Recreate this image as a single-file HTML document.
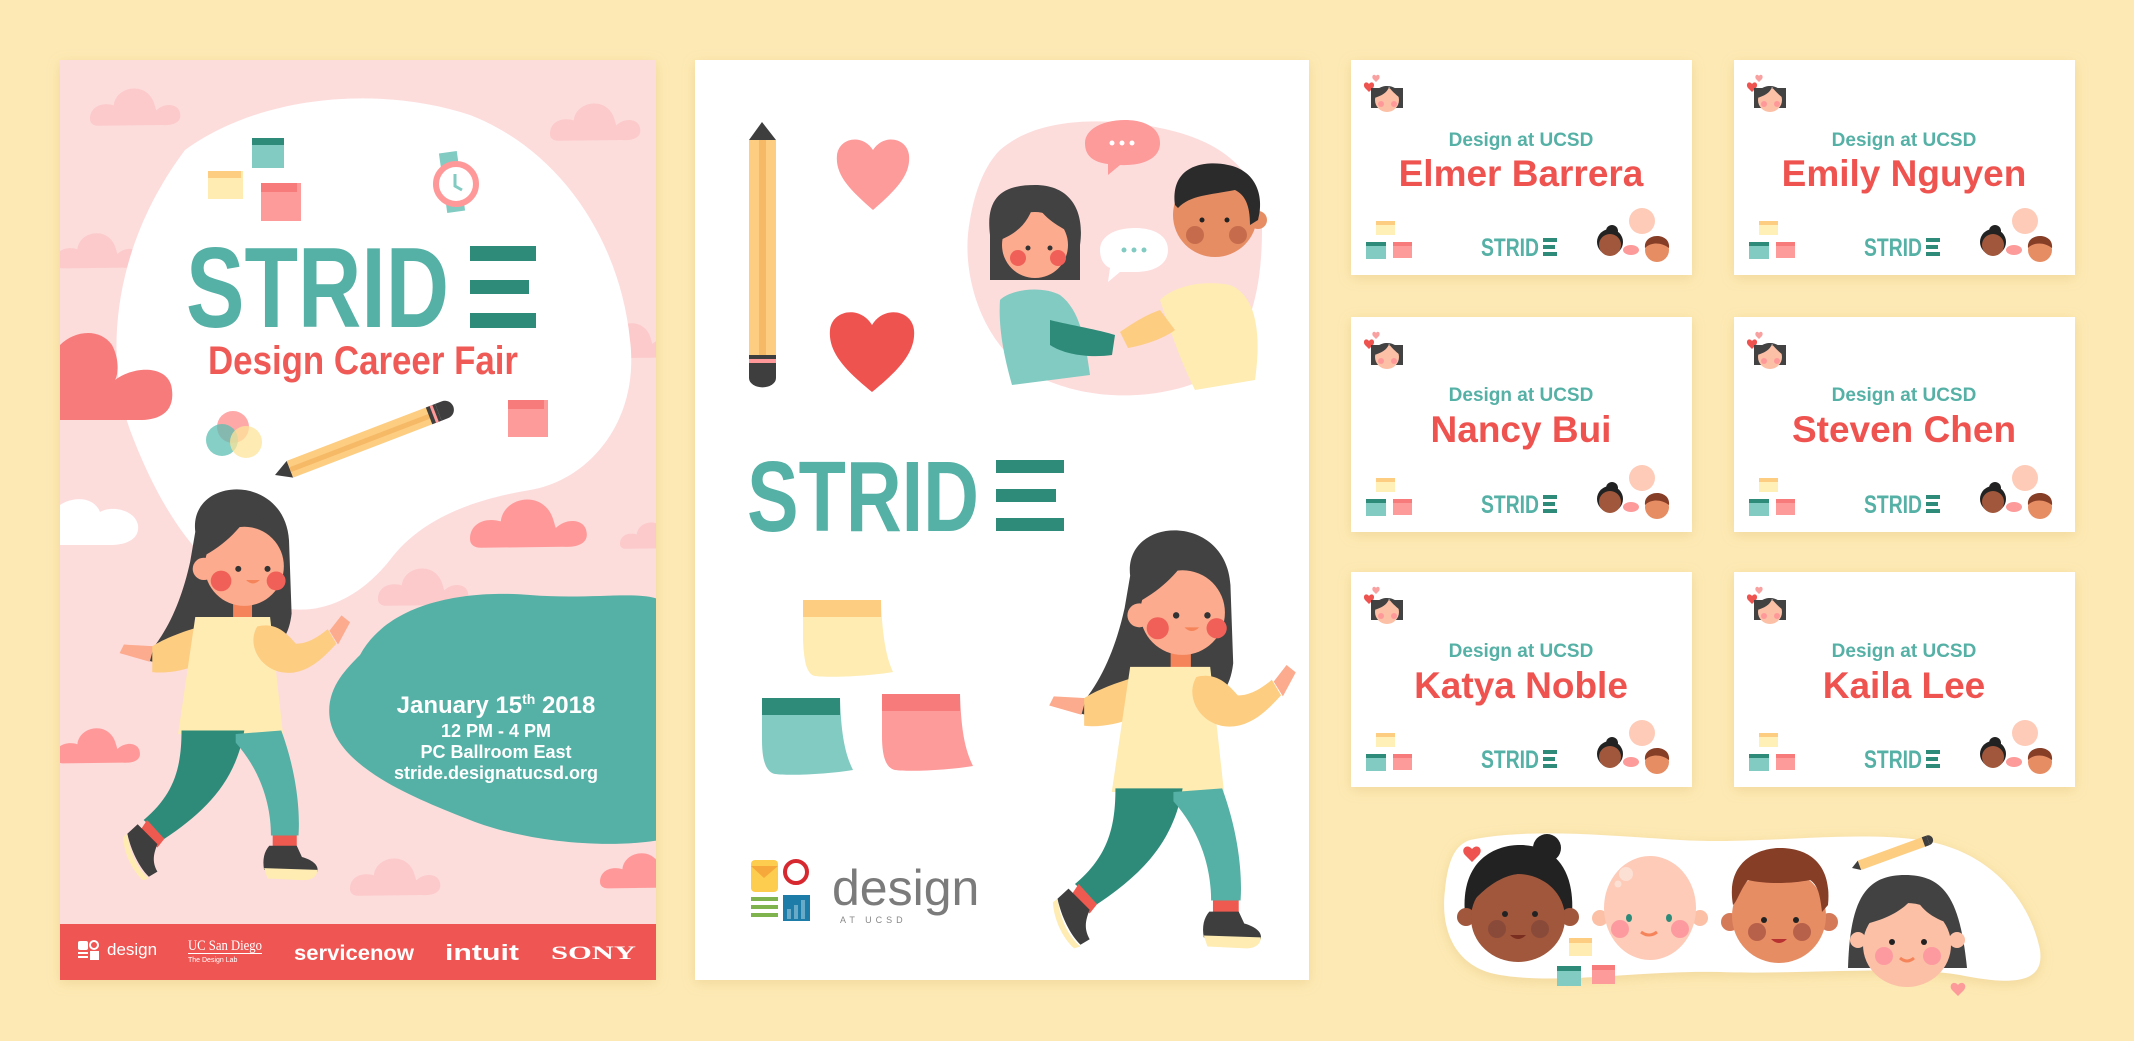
<!DOCTYPE html>
<html><head><meta charset="utf-8"><style>
html,body{margin:0;padding:0;background:#fde9b4;}
svg{display:block}
text{font-family:"Liberation Sans",sans-serif;font-weight:bold}
</style></head><body>
<svg width="2134" height="1041" viewBox="0 0 2134 1041" xmlns="http://www.w3.org/2000/svg">
<defs>
<filter id="sh" x="-10%" y="-10%" width="120%" height="120%"><feDropShadow dx="0" dy="3" stdDeviation="6" flood-color="#d9b76a" flood-opacity="0.35"/></filter>
<g id="cloud"><path d="M0 40 C0 25 15 20 28 24 C30 5 55 -2 68 10 C75 16 76 24 78 30 C88 20 105 22 106 34 C108 45 95 48 85 47 L10 48 C4 48 0 45 0 40Z"/></g>
<g id="girl">
  <path d="M-52 -35 C-60 -100 52 -105 57 -25 L60 60 C56 95 38 105 18 98 L-30 108 C-70 118 -100 120 -112 112 C-85 85 -68 45 -58 0 Z" fill="#424242"/>
  <rect x="-8" y="42" width="22" height="25" fill="#f6845a"/>
  <path d="M-100 98 L-135 96 L-140 106 L-105 116Z" fill="#fcab8e"/>
  <path d="M-45 75 C-65 80 -90 90 -102 98 L-102 128 C-85 130 -65 126 -50 120 Z" fill="#fdcd82"/>
  <path d="M-52 64 L35 64 L50 200 L-72 200 Z" fill="#feecb3"/>
  <path d="M20 75 C5 100 30 135 65 128 C85 124 100 108 112 95 L102 78 C90 88 78 95 65 95 C52 80 40 70 20 75Z" fill="#fdcd82"/>
  <path d="M104 80 L118 62 L128 70 L114 96Z" fill="#fcab8e"/>
  <path d="M-68 196 L5 196 C-5 255 -40 290 -88 322 L-112 300 C-76 270 -68 238 -68 196Z" fill="#2e8b7a"/>
  <path d="M-5 200 L48 196 C66 245 70 290 68 318 L36 318 C36 285 26 245 -5 210Z" fill="#55b0a5"/>
  <path d="M-108 300 L-88 322 L-96 332 L-116 312Z" fill="#ef5a50"/>
  <path d="M38 318 L66 318 L66 332 L38 332Z" fill="#ef5a50"/>
  <path d="M-119 305 L-96 328 C-100 338 -103 348 -96 360 L-106 366 C-120 352 -128 330 -131 316Z" fill="#3e3e3e"/>
  <path d="M-131 316 C-128 338 -120 356 -106 368 L-113 370 C-126 358 -135 338 -136 320Z" fill="#feecb3"/>
  <path d="M34 330 L66 330 L72 343 C83 346 92 352 90 360 L28 358 C26 346 28 337 34 330Z" fill="#3e3e3e"/>
  <path d="M28 356 L90 358 C90 366 83 370 74 370 L32 368Z" fill="#feecb3"/>
  <circle cx="-42" cy="8" r="13" fill="#fcab8e"/>
  <circle cx="5" cy="5" r="46" fill="#fcab8e"/>
  <path d="M-46 -5 C-54 -68 50 -76 56 -8 C40 -28 22 -50 14 -64 C6 -44 -16 -20 -46 -5Z" fill="#424242"/>
  <circle cx="-22" cy="22" r="12" fill="#f06059"/><circle cx="42" cy="22" r="11" fill="#f06059"/>
  <circle cx="-2" cy="8" r="3.5" fill="#333"/><circle cx="32" cy="8" r="3.5" fill="#333"/>
  <path d="M7 21 Q15 29 23 21Z" fill="#f6845a"/>
</g>
<g id="face-f">
  <rect x="-16" y="-10" width="32" height="20" fill="#424242"/>
  <circle cx="0" cy="2" r="12" fill="#fcc0a6"/>
  <path d="M-13 0 C-14 -16 14 -16 13 0 C8 -4 4 -8 2 -11 C0 -5 -6 -2 -13 0Z" fill="#424242"/>
  <circle cx="-6" cy="6" r="3" fill="#f99"/><circle cx="7" cy="6" r="3" fill="#f99"/>
</g>
<g id="cardart">
  <rect width="341" height="215" fill="#fff" filter="url(#sh)"/>
  <path d="M14 28 c-3 -4 1 -8 4 -4 c3 -4 7 0 4 4 l-4 4z" fill="#ef5350"/>
  <path d="M22 19 c-2 -3 1 -6 3 -3 c2 -3 5 0 3 3 l-3 3z" fill="#f9a0a0"/>
  <use href="#face-f" transform="translate(36,38)"/>
  <rect x="25" y="161" width="19" height="14" fill="#fff0b8"/><rect x="25" y="161" width="19" height="4" fill="#fdcd82"/>
  <rect x="15" y="182" width="20" height="17" fill="#82cbc2"/><rect x="15" y="182" width="20" height="4" fill="#2e8b7a"/>
  <rect x="42" y="182" width="19" height="16" fill="#fd9a9a"/><rect x="42" y="182" width="19" height="4" fill="#f77b7b"/>
  <text x="130" y="196" font-size="25" fill="#55b0a5" textLength="58" lengthAdjust="spacingAndGlyphs">STRID</text>
  <rect x="192" y="178" width="14" height="4" fill="#2e8b7a"/><rect x="192" y="185" width="12" height="4" fill="#2e8b7a"/><rect x="192" y="192" width="14" height="4" fill="#2e8b7a"/>
  <circle cx="261" cy="171" r="6" fill="#222"/>
  <circle cx="259" cy="182" r="13" fill="#222"/><circle cx="259" cy="185" r="11" fill="#a0573c"/>
  <circle cx="291" cy="161" r="13" fill="#fdcbb8"/>
  <ellipse cx="280" cy="190" rx="8" ry="5" fill="#fd9a9a"/>
  <circle cx="306" cy="190" r="12" fill="#e68d64"/><path d="M294 188 C292 172 320 172 318 188 C310 182 300 182 294 188Z" fill="#863e27"/>
</g>
</defs>

<!-- ============ POSTER ============ -->
<g filter="url(#sh)"><rect x="60" y="60" width="596" height="920" fill="#fddcdc"/></g>
<clipPath id="pc"><rect x="60" y="60" width="596" height="920"/></clipPath>
<g clip-path="url(#pc)">
  <g fill="#fccaca">
    <use href="#cloud" transform="translate(90,85) scale(0.85)"/>
    <use href="#cloud" transform="translate(550,100) scale(0.85)"/>
    <use href="#cloud" transform="translate(55,230) scale(0.8)"/>
    <use href="#cloud" transform="translate(590,320) scale(0.8)"/>
    <use href="#cloud" transform="translate(378,565) scale(0.85)"/>
    <use href="#cloud" transform="translate(620,520) scale(0.6)"/>
    <use href="#cloud" transform="translate(350,855) scale(0.85)"/>
  </g>
  <g fill="#f99">
    <use href="#cloud" transform="translate(470,495) scale(1.1)"/>
    <use href="#cloud" transform="translate(55,725) scale(0.8)"/>
    <use href="#cloud" transform="translate(600,850) scale(0.8)"/>
  </g>
  <path d="M185 150 C260 95 380 85 470 115 C560 150 620 240 630 340 C640 420 590 480 530 490 C470 500 420 520 390 560 C350 610 300 620 260 600 C200 570 160 510 130 430 C105 360 110 250 185 150Z" fill="#fff"/>
  <path d="M60 345 C75 330 100 328 112 345 C120 360 118 375 115 380 C135 365 170 365 172 390 C175 415 155 420 140 420 L60 420Z" fill="#f77b7b"/>
  <path d="M60 505 C75 495 95 498 100 512 C112 505 135 510 138 525 C140 540 125 545 110 545 L60 545Z" fill="#fff"/>
  <path d="M360 655 C390 600 470 590 530 595 C590 600 640 590 660 600 L660 840 C600 850 520 840 470 820 C420 800 340 770 330 720 C325 690 345 670 360 655Z" fill="#55b0a5"/>
  <rect x="208" y="171" width="35" height="28" fill="#feecb3"/><rect x="208" y="171" width="33" height="7" fill="#fdcd82"/>
  <rect x="252" y="138" width="32" height="30" fill="#82cbc2"/><rect x="252" y="138" width="32" height="7" fill="#2e8b7a"/>
  <rect x="261" y="183" width="40" height="38" fill="#fd9a9a"/><rect x="261" y="183" width="36" height="9" fill="#f77b7b"/>
  <rect x="508" y="400" width="40" height="37" fill="#fd9a9a"/><rect x="508" y="400" width="36" height="9" fill="#f77b7b"/>
  <rect x="443" y="152" width="18" height="60" fill="#82cbc2" transform="rotate(-8 452 182)"/>
  <circle cx="456" cy="184" r="20" fill="#fff" stroke="#f99" stroke-width="6"/>
  <path d="M455 174 L455 186 L462 190" stroke="#82cbc2" stroke-width="3" fill="none"/>
  <circle cx="233" cy="427" r="16" fill="#f99" opacity="0.85"/>
  <circle cx="222" cy="440" r="16" fill="#5cbfb3" opacity="0.75"/>
  <circle cx="246" cy="442" r="16" fill="#fde49a" opacity="0.75"/>
  <g transform="translate(275,475) rotate(-21)">
    <path d="M0 0 L16 -9 L16 9Z" fill="#3e3e3e"/>
    <rect x="16" y="-9" width="155" height="18" fill="#fdcd82"/><rect x="16" y="-2" width="155" height="5" fill="#f6b966"/>
    <rect x="165" y="-9" width="10" height="18" fill="#3e3e3e"/><rect x="169" y="-9" width="3" height="18" fill="#f99"/>
    <path d="M175 -9 L182 -9 A9 9 0 0 1 182 9 L175 9Z" fill="#3e3e3e"/>
  </g>
  <text x="186" y="327" font-size="114" fill="#55b0a5" textLength="263" lengthAdjust="spacingAndGlyphs">STRID</text>
  <rect x="470" y="246" width="66" height="15" fill="#2e8b7a"/><rect x="470" y="280" width="59" height="14" fill="#2e8b7a"/><rect x="470" y="313" width="66" height="15" fill="#2e8b7a"/>
  <text x="208" y="374" font-size="40" fill="#ef5a56" textLength="310" lengthAdjust="spacingAndGlyphs">Design Career Fair</text>
  <use href="#girl" transform="translate(240,562) scale(0.86)"/>
  <g fill="#fff" text-anchor="middle">
    <text x="496" y="713" font-size="24">January 15<tspan font-size="14" dy="-9">th</tspan><tspan dy="9"> 2018</tspan></text>
    <text x="496" y="737" font-size="18">12 PM - 4 PM</text>
    <text x="496" y="758" font-size="18">PC Ballroom East</text>
    <text x="496" y="779" font-size="18">stride.designatucsd.org</text>
  </g>
  <rect x="60" y="924" width="596" height="56" fill="#ef5552"/>
  <g fill="#fff">
    <rect x="78" y="941" width="10" height="9" rx="2"/><circle cx="94" cy="945" r="4" fill="none" stroke="#fff" stroke-width="2"/>
    <rect x="78" y="952" width="10" height="2"/><rect x="78" y="956" width="10" height="2"/><rect x="90" y="951" width="9" height="9"/>
    <text x="107" y="955" font-size="17" style="font-weight:normal">design</text>
    <text x="188" y="950" font-size="15" style="font-family:'Liberation Serif',serif;font-weight:normal" textLength="74" lengthAdjust="spacingAndGlyphs">UC San Diego</text>
    <rect x="188" y="953" width="74" height="1"/>
    <text x="188" y="962" font-size="7" style="font-weight:normal">The Design Lab</text>
    <text x="294" y="960" font-size="21" textLength="120" lengthAdjust="spacingAndGlyphs">servicenow</text>
    <text x="445" y="960" font-size="22" textLength="74" lengthAdjust="spacingAndGlyphs">intuit</text>
    <text x="551" y="959" font-size="19" style="font-family:'Liberation Serif',serif" textLength="85" lengthAdjust="spacingAndGlyphs">SONY</text>
  </g>
</g>

<!-- ============ MIDDLE PANEL ============ -->
<rect x="695" y="60" width="614" height="920" fill="#fff" filter="url(#sh)"/>
<clipPath id="mc"><rect x="695" y="60" width="614" height="920"/></clipPath>
<g clip-path="url(#mc)">
<path d="M762 122 L776 140 L749 140Z" fill="#3e3e3e"/>
<rect x="749" y="140" width="27" height="215" fill="#fdcd82"/><rect x="759" y="140" width="7" height="215" fill="#f6b966"/>
<rect x="749" y="355" width="27" height="14" fill="#3e3e3e"/><rect x="749" y="359" width="27" height="4" fill="#f99"/>
<path d="M749 369 L776 369 L776 378 A13 9 0 0 1 749 378Z" fill="#3e3e3e"/>
<path d="M873 210 C850 190 835 175 837 155 C839 138 862 133 873 150 C884 133 907 138 909 155 C911 175 896 190 873 210Z" fill="#fd9a9a"/>
<path d="M872 392 C845 370 828 352 830 330 C832 310 860 305 872 325 C884 305 912 310 914 330 C916 352 899 370 872 392Z" fill="#ef5350"/>
<path d="M1000 150 C1040 115 1110 118 1160 128 C1220 140 1262 170 1262 230 C1262 300 1245 360 1190 385 C1130 405 1060 395 1020 365 C980 335 960 270 970 220 C975 190 985 165 1000 150Z" fill="#fddcdc"/>
<path d="M1085 143 C1085 128 1105 120 1125 120 C1145 120 1160 128 1160 143 C1160 160 1140 166 1120 165 L1108 175 L1108 164 C1092 162 1085 155 1085 143Z" fill="#fd9a9a"/>
<g fill="#fff"><circle cx="1112" cy="143" r="2.5"/><circle cx="1122" cy="143" r="2.5"/><circle cx="1132" cy="143" r="2.5"/></g>
<path d="M1100 250 C1100 236 1115 228 1135 228 C1155 228 1168 236 1168 250 C1168 264 1155 272 1135 272 L1120 272 L1108 282 L1110 268 C1103 265 1100 258 1100 250Z" fill="#fff"/>
<g fill="#82cbc2"><circle cx="1124" cy="250" r="2.5"/><circle cx="1134" cy="250" r="2.5"/><circle cx="1144" cy="250" r="2.5"/></g>
<path d="M1000 300 C1010 290 1040 285 1060 295 C1080 310 1085 340 1090 375 L1012 385 C1005 360 998 330 1000 300Z" fill="#82cbc2"/>
<path d="M1050 320 C1070 325 1100 330 1115 335 L1112 355 C1090 358 1065 355 1050 345Z" fill="#2e8b7a"/>
<path d="M990 235 C985 195 1005 185 1035 185 C1070 185 1085 210 1080 245 L1080 280 L990 280Z" fill="#424242"/>
<circle cx="1035" cy="245" r="33" fill="#fcab8e"/>
<path d="M1000 240 C995 195 1075 190 1075 235 C1055 225 1040 215 1035 200 C1030 220 1020 232 1000 240Z" fill="#424242"/>
<circle cx="1018" cy="258" r="8" fill="#f06059"/><circle cx="1058" cy="258" r="8" fill="#f06059"/>
<circle cx="1028" cy="248" r="2.5" fill="#333"/><circle cx="1050" cy="248" r="2.5" fill="#333"/>
<path d="M1160 300 C1175 285 1205 280 1230 285 C1255 295 1262 330 1255 380 L1195 390 C1180 360 1170 330 1160 300Z" fill="#feecb3"/>
<path d="M1160 310 C1145 315 1130 325 1120 332 L1128 348 C1145 345 1165 338 1175 330Z" fill="#fdcd82"/>
<circle cx="1215" cy="215" r="42" fill="#e68d64"/>
<circle cx="1258" cy="220" r="9" fill="#e68d64"/>
<path d="M1175 205 C1170 165 1205 160 1228 165 C1255 170 1265 195 1258 220 L1250 225 C1250 205 1245 195 1235 190 C1210 195 1190 195 1178 208Z" fill="#2b2b2b"/>
<circle cx="1195" cy="235" r="9" fill="#b85e42" opacity="0.7"/><circle cx="1238" cy="235" r="9" fill="#b85e42" opacity="0.7"/>
<circle cx="1202" cy="220" r="2.5" fill="#222"/><circle cx="1227" cy="220" r="2.5" fill="#222"/>
<text x="747" y="531" font-size="100" fill="#55b0a5" textLength="232" lengthAdjust="spacingAndGlyphs">STRID</text>
<rect x="996" y="460" width="68" height="13" fill="#2e8b7a"/><rect x="996" y="489" width="60" height="13" fill="#2e8b7a"/><rect x="996" y="518" width="68" height="13" fill="#2e8b7a"/>
<path d="M803 600 L881 600 C882 630 885 655 893 672 C870 676 830 678 815 676 C806 674 804 660 803 640Z" fill="#feecb3"/><rect x="803" y="600" width="78" height="17" fill="#fdcd82"/>
<path d="M762 698 L840 698 C841 730 844 752 853 770 C830 774 790 776 775 774 C765 772 762 758 762 740Z" fill="#82cbc2"/><rect x="762" y="698" width="78" height="17" fill="#2e8b7a"/>
<path d="M882 694 L960 694 C961 726 964 748 973 766 C950 770 910 772 895 770 C885 768 882 754 882 736Z" fill="#fd9a9a"/><rect x="882" y="694" width="78" height="17" fill="#f77b7b"/>
<rect x="751" y="860" width="27" height="32" rx="4" fill="#fdcd4f"/><path d="M751 866 L764 878 L778 866" fill="#f6a93a"/>
<circle cx="796" cy="872" r="11" fill="none" stroke="#d7282f" stroke-width="4"/>
<rect x="751" y="897" width="27" height="4" fill="#7fb34d"/><rect x="751" y="905" width="27" height="4" fill="#7fb34d"/><rect x="751" y="913" width="27" height="4" fill="#7fb34d"/>
<rect x="783" y="895" width="27" height="26" fill="#1d7ca8"/>
<rect x="787" y="909" width="4" height="10" fill="#6aaac9"/><rect x="794" y="905" width="4" height="14" fill="#6aaac9"/><rect x="801" y="900" width="4" height="19" fill="#6aaac9"/>
<text x="832" y="905" font-size="50" fill="#7b7b7b" style="font-weight:normal">design</text>
<text x="840" y="923" font-size="9" fill="#888" style="font-weight:normal;letter-spacing:4px">AT UCSD</text>
<use href="#girl" transform="translate(1178,608) scale(0.92)"/>
</g>

<!-- ============ NAME CARDS ============ -->
<g transform="translate(1351,60)"><use href="#cardart"/><text x="170" y="86" font-size="19" fill="#55b0a5" text-anchor="middle">Design at UCSD</text><text x="170" y="126" font-size="37" fill="#ef5350" text-anchor="middle">Elmer Barrera</text></g>
<g transform="translate(1734,60)"><use href="#cardart"/><text x="170" y="86" font-size="19" fill="#55b0a5" text-anchor="middle">Design at UCSD</text><text x="170" y="126" font-size="37" fill="#ef5350" text-anchor="middle">Emily Nguyen</text></g>
<g transform="translate(1351,317)"><use href="#cardart"/><text x="170" y="84" font-size="19" fill="#55b0a5" text-anchor="middle">Design at UCSD</text><text x="170" y="125" font-size="37" fill="#ef5350" text-anchor="middle">Nancy Bui</text></g>
<g transform="translate(1734,317)"><use href="#cardart"/><text x="170" y="84" font-size="19" fill="#55b0a5" text-anchor="middle">Design at UCSD</text><text x="170" y="125" font-size="37" fill="#ef5350" text-anchor="middle">Steven Chen</text></g>
<g transform="translate(1351,572)"><use href="#cardart"/><text x="170" y="85" font-size="19" fill="#55b0a5" text-anchor="middle">Design at UCSD</text><text x="170" y="126" font-size="37" fill="#ef5350" text-anchor="middle">Katya Noble</text></g>
<g transform="translate(1734,572)"><use href="#cardart"/><text x="170" y="85" font-size="19" fill="#55b0a5" text-anchor="middle">Design at UCSD</text><text x="170" y="126" font-size="37" fill="#ef5350" text-anchor="middle">Kaila Lee</text></g>

<!-- ============ STICKER ============ -->
<path d="M1470 840 C1530 828 1600 835 1680 840 C1760 845 1850 830 1920 840 C1990 850 2030 900 2040 950 C2045 985 2010 985 1960 975 C1900 965 1800 975 1720 972 C1640 970 1560 985 1500 975 C1455 968 1440 930 1445 890 C1448 860 1455 845 1470 840Z" fill="#fff" filter="url(#sh)"/>
<path d="M1465 855 c-5 -6 2 -12 7 -6 c5 -6 12 0 7 6 l-7 7z" fill="#ef5350"/>
<path d="M1952 990 c-4 -5 2 -10 6 -5 c4 -5 10 0 6 5 l-6 6z" fill="#fd9a9a"/>
<circle cx="1547" cy="848" r="14" fill="#222"/>
<path d="M1465 915 C1460 860 1495 845 1520 845 C1555 845 1575 870 1572 915 Z" fill="#222"/>
<circle cx="1466" cy="917" r="9" fill="#a0573c"/><circle cx="1570" cy="917" r="9" fill="#a0573c"/>
<ellipse cx="1518" cy="918" rx="47" ry="44" fill="#a0573c"/>
<path d="M1470 905 C1470 870 1490 860 1518 860 C1545 860 1565 875 1567 905 C1560 890 1545 880 1530 875 C1515 870 1490 880 1470 905Z" fill="#222"/>
<circle cx="1497" cy="929" r="9" fill="#8a4a3a"/><circle cx="1540" cy="929" r="9" fill="#8a4a3a"/>
<circle cx="1505" cy="914" r="3" fill="#222"/><circle cx="1535" cy="914" r="3" fill="#222"/>
<path d="M1510 935 Q1518 943 1526 935Z" fill="#7a2e20"/>
<circle cx="1600" cy="918" r="8" fill="#fcc0a6"/><circle cx="1700" cy="918" r="8" fill="#fcc0a6"/>
<ellipse cx="1650" cy="908" rx="46" ry="52" fill="#fdcbb8"/>
<circle cx="1626" cy="874" r="7" fill="#fde0d4"/><circle cx="1618" cy="884" r="3.5" fill="#fde0d4"/>
<circle cx="1620" cy="929" r="9" fill="#fd9aa0"/><circle cx="1680" cy="929" r="9" fill="#fd9aa0"/>
<ellipse cx="1629" cy="918" rx="3" ry="4" fill="#2e8b7a"/><ellipse cx="1669" cy="918" rx="3" ry="4" fill="#2e8b7a"/>
<path d="M1641 932 Q1649 938 1657 932" stroke="#f6845a" stroke-width="3" fill="none"/>
<circle cx="1730" cy="922" r="9" fill="#d57a58"/><circle cx="1829" cy="922" r="9" fill="#d57a58"/>
<ellipse cx="1779" cy="916" rx="47" ry="47" fill="#e68d64"/>
<path d="M1733 905 C1725 860 1760 848 1780 848 C1810 848 1832 865 1828 905 L1822 912 C1820 895 1818 885 1810 880 C1790 884 1765 884 1748 880 C1740 890 1738 900 1733 905Z" fill="#863e27"/>
<circle cx="1757" cy="932" r="9" fill="#b8614a"/><circle cx="1802" cy="932" r="9" fill="#b8614a"/>
<circle cx="1764" cy="920" r="3" fill="#222"/><circle cx="1796" cy="920" r="3" fill="#222"/>
<path d="M1771 939 Q1779 947 1787 939Z" fill="#b83232"/>
<path d="M1848 968 C1850 900 1865 875 1905 875 C1945 875 1960 900 1967 968Z" fill="#424242"/>
<circle cx="1858" cy="940" r="8" fill="#fcc0a6"/><circle cx="1957" cy="940" r="8" fill="#fcc0a6"/>
<ellipse cx="1907" cy="945" rx="44" ry="42" fill="#fcc0a6"/>
<path d="M1861 925 C1860 890 1875 882 1905 882 C1935 882 1955 895 1955 925 C1935 920 1920 910 1915 895 C1905 910 1885 920 1861 925Z" fill="#424242"/>
<circle cx="1884" cy="956" r="9" fill="#fd9aa0"/><circle cx="1932" cy="956" r="9" fill="#fd9aa0"/>
<circle cx="1892" cy="942" r="3" fill="#222"/><circle cx="1924" cy="942" r="3" fill="#222"/>
<path d="M1900 958 Q1907 964 1914 958" stroke="#f6845a" stroke-width="3" fill="none"/>
<g transform="translate(1852,868) rotate(-20)">
  <path d="M0 0 L8 -5 L8 5Z" fill="#3e3e3e"/><rect x="8" y="-5" width="72" height="10" fill="#fdcd82"/>
  <rect x="76" y="-5" width="5" height="10" fill="#3e3e3e"/><path d="M81 -5 A5 5 0 0 1 81 5Z" fill="#3e3e3e"/>
</g>
<rect x="1569" y="938" width="23" height="18" fill="#feecb3"/><rect x="1569" y="938" width="23" height="5" fill="#fdcd82"/>
<rect x="1557" y="966" width="24" height="20" fill="#82cbc2"/><rect x="1557" y="966" width="24" height="5" fill="#2e8b7a"/>
<rect x="1592" y="965" width="23" height="19" fill="#fd9a9a"/><rect x="1592" y="965" width="23" height="5" fill="#f77b7b"/>
</svg>
</body></html>
